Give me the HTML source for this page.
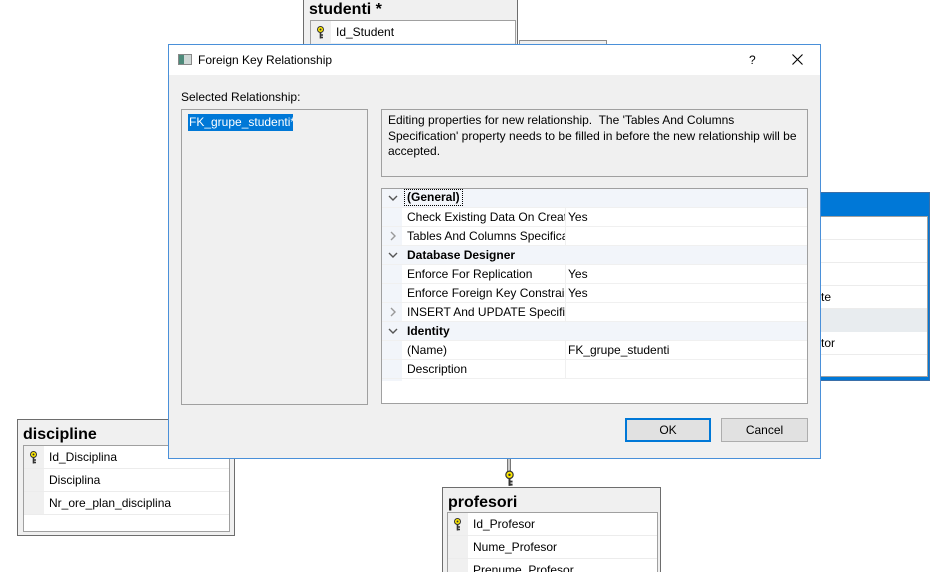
<!DOCTYPE html>
<html style="overflow:hidden;width:930px;height:572px"><head><meta charset="utf-8"><style>
*{margin:0;padding:0;box-sizing:border-box}
body{width:930px;height:572px;background:#fff;position:relative;overflow:hidden;font-family:"Liberation Sans","DejaVu Sans",sans-serif;font-size:12px;color:#000}
.abs{position:absolute}
.tbl{position:absolute;background:#f0f0f0;border:1px solid #6d6d6d}
.tbl h1{font-size:16px;font-weight:bold;padding:0 0 0 5px;line-height:20px}
.inner{position:absolute;background:#fff;border:1px solid #a0a0a0}
.row{height:23px;border-bottom:1px solid #ececec;line-height:22px;padding-left:25px;position:relative}
.row .g{position:absolute;left:0;top:0;width:20px;height:22px;background:#f0f0f0}
.key{position:absolute;left:5px;top:5px;width:9px;height:13px}
.pg{position:absolute;left:381px;top:188px;width:427px;height:216px;background:#fff;border:1px solid #a0a0a0;overflow:hidden}
.pr{position:absolute;left:0;width:425px;height:19px;line-height:18px;border-bottom:1px solid #f0f0f0}
.pr .n{position:absolute;left:25px;white-space:nowrap;overflow:hidden;width:158px}
.pr .v{position:absolute;left:183px;border-left:1px solid #f0f0f0;padding-left:2px;height:18px;width:242px}
.pr.c{background:#f2f5fa;font-weight:bold}
.arr{position:absolute;left:6px;top:5px}
.btn{position:absolute;height:24px;background:#e1e1e1;border:1px solid #adadad;text-align:center;line-height:22px}
</style></head><body>
<svg width="0" height="0" style="position:absolute"><defs><g id="k"><circle cx="4.5" cy="3.5" r="3" fill="#ffea00" stroke="#333" stroke-width="1"/><circle cx="4.5" cy="3.5" r="1" fill="#333"/><path d="M4.5 6.5V12.5M4.5 9H7M4.5 11.5H7" stroke="#333" stroke-width="1.6" fill="none"/></g>
<path id="dn" d="M1 2L5 6L9 2" stroke="#555" stroke-width="1.4" fill="none"/>
<path id="rt" d="M3 1L7 5L3 9" stroke="#999" stroke-width="1.4" fill="none"/></defs></svg>

<!-- studenti -->
<div class="tbl" style="left:303px;top:-2px;width:215px;height:60px"><h1 style="margin-top:1px">studenti *</h1>
<div class="inner" style="left:6px;top:21px;width:206px;height:40px"><div class="row"><div class="g"></div><svg class="key" viewBox="0 0 9 13"><use href="#k"/></svg>Id_Student</div></div></div>
<div class="abs" style="left:519px;top:40px;width:88px;height:10px;border:1px solid #8a8a8a;background:#f0f0f0"></div>

<!-- right table -->
<div class="abs" style="left:815px;top:192px;width:115px;height:189px;background:#0078d7;border:1px solid #3b6fa8"></div>
<div class="abs" style="left:817px;top:216px;width:111px;height:161px;background:#fff;border:1px solid #a0a0a0">
<div style="height:23px;border-bottom:1px solid #ececec"></div>
<div style="height:23px;border-bottom:1px solid #ececec"></div>
<div style="height:23px;border-bottom:1px solid #ececec"></div>
<div style="height:23px;border-bottom:1px solid #ececec;line-height:22px;padding-left:3px">te</div>
<div style="height:23px;background:#e8ecef"></div>
<div style="height:23px;border-bottom:1px solid #ececec;line-height:22px;padding-left:3px">tor</div>
</div>

<!-- discipline -->
<div class="tbl" style="left:17px;top:419px;width:218px;height:117px"><h1 style="margin-top:5px">discipline</h1>
<div class="inner" style="left:5px;top:25px;width:207px;height:87px">
<div class="row"><div class="g"></div><svg class="key" viewBox="0 0 9 13"><use href="#k"/></svg>Id_Disciplina</div>
<div class="row"><div class="g"></div>Disciplina</div>
<div class="row"><div class="g"></div>Nr_ore_plan_disciplina</div></div></div>

<!-- connector -->
<div class="abs" style="left:507px;top:458px;width:4px;height:14px;background:#c8c8c8;border-left:1px solid #777;border-right:1px solid #777"></div>
<svg class="abs" style="left:504px;top:470px" width="11" height="17" viewBox="0 0 9 13"><use href="#k"/></svg>

<!-- profesori -->
<div class="tbl" style="left:442px;top:487px;width:219px;height:90px"><h1 style="margin-top:5px">profesori</h1>
<div class="inner" style="left:4px;top:24px;width:211px;height:70px">
<div class="row"><div class="g"></div><svg class="key" viewBox="0 0 9 13"><use href="#k"/></svg>Id_Profesor</div>
<div class="row"><div class="g"></div>Nume_Profesor</div>
<div class="row"><div class="g"></div>Prenume_Profesor</div></div></div>

<!-- dialog -->
<div class="abs" style="left:168px;top:44px;width:653px;height:415px;background:#f0f0f0;border:1px solid #4a90d9">
<div style="height:30px;background:#fff;position:relative">
<div class="abs" style="left:9px;top:9px;width:14px;height:11px;border:1px solid #888;background:linear-gradient(90deg,#4d8a7a 0 40%,#cfd8d6 40%)"></div>
<div class="abs" style="left:29px;top:8px;font-size:12px">Foreign Key Relationship</div>
<div class="abs" style="left:580px;top:8px">?</div>
<svg class="abs" style="left:623px;top:9px" width="11" height="11"><path d="M0.5 0.5L10.5 10.5M10.5 0.5L0.5 10.5" stroke="#000" stroke-width="1.1"/></svg>
</div>
<div class="abs" style="left:12px;top:45px">Selected Relationship:</div>
</div>
<div class="abs" style="left:181px;top:109px;width:187px;height:296px;background:#f0f0f0;border:1px solid #a0a0a0"></div>
<div class="abs" style="left:188px;top:114px;width:105px;height:17px;background:#0078d7;color:#fff;line-height:16px;padding-left:1px;white-space:nowrap;overflow:hidden">FK_grupe_studenti*</div>
<div class="abs" style="left:381px;top:109px;width:427px;height:68px;background:#f0f0f0;border:1px solid #a0a0a0;padding:3px 6px;line-height:15.5px">Editing properties for new relationship.&nbsp; The 'Tables And Columns Specification' property needs to be filled in before the new relationship will be accepted.</div>

<div class="pg">
<div class="abs" style="left:0;top:0;width:20px;height:192px;background:#f2f5fa"></div>
<div class="pr c" style="top:0"><svg class="arr" width="10" height="8"><use href="#dn"/></svg><span class="n" style="left:22px;border:1px dotted #000;padding:0 2px;width:auto;height:17px;line-height:15px">(General)</span></div>
<div class="pr" style="top:19px"><div class="n">Check Existing Data On Creation</div><div class="v">Yes</div></div>
<div class="pr" style="top:38px"><svg class="arr" width="10" height="10" style="top:4px"><use href="#rt"/></svg><div class="n">Tables And Columns Specification</div><div class="v"></div></div>
<div class="pr c" style="top:57px"><svg class="arr" width="10" height="8"><use href="#dn"/></svg><div class="n">Database Designer</div></div>
<div class="pr" style="top:76px"><div class="n">Enforce For Replication</div><div class="v">Yes</div></div>
<div class="pr" style="top:95px"><div class="n">Enforce Foreign Key Constraint</div><div class="v">Yes</div></div>
<div class="pr" style="top:114px"><svg class="arr" width="10" height="10" style="top:4px"><use href="#rt"/></svg><div class="n">INSERT And UPDATE Specification</div><div class="v"></div></div>
<div class="pr c" style="top:133px"><svg class="arr" width="10" height="8"><use href="#dn"/></svg><div class="n">Identity</div></div>
<div class="pr" style="top:152px"><div class="n">(Name)</div><div class="v">FK_grupe_studenti</div></div>
<div class="pr" style="top:171px"><div class="n">Description</div><div class="v"></div></div>
</div>

<div class="btn" style="left:625px;top:418px;width:86px;border:2px solid #0078d7;line-height:20px">OK</div>
<div class="btn" style="left:721px;top:418px;width:87px">Cancel</div>
</body></html>
